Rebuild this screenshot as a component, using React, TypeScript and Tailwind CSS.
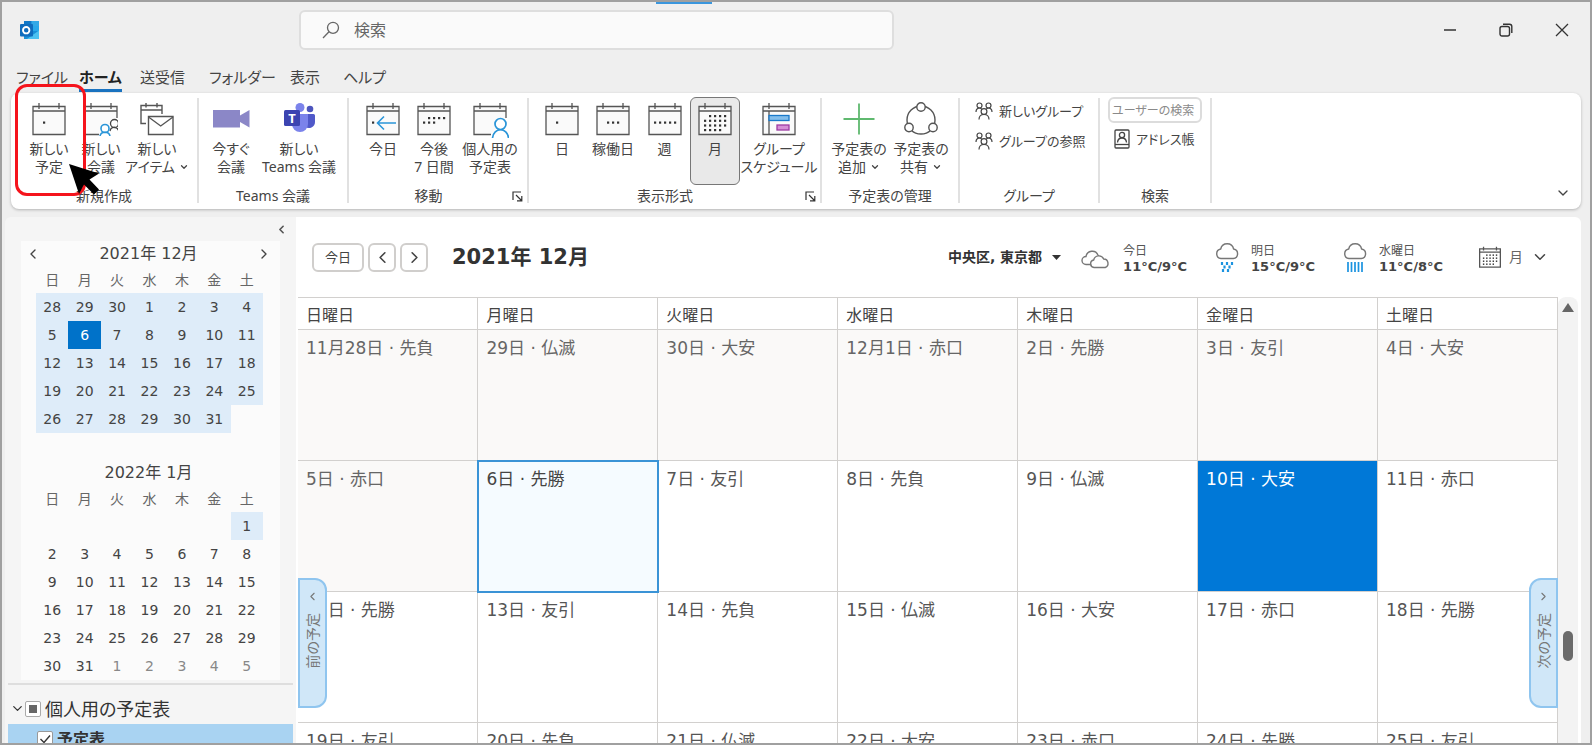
import React from 'react';
import clsx from 'clsx';
import { ChevronDown, ChevronLeft, ChevronRight } from 'lucide-react';

const UI_FONT = "font-['Noto_Sans','Noto_Sans_CJK_JP',sans-serif] [font-feature-settings:'palt']";
const CAL_FONT = "font-['DejaVu_Sans','Noto_Sans_CJK_JP',sans-serif]";

const TABS = [
    { label: 'ファイル', width: 'w-[63px]' },
    { label: 'ホーム', width: 'w-[61px]' },
    { label: '送受信', width: 'w-[69px]' },
    { label: 'フォルダー', width: 'w-[81px]' },
    { label: '表示', width: 'w-[53px]' },
    { label: 'ヘルプ', width: 'w-[53px]' },
];

const DAYS = ['日', '月', '火', '水', '木', '金', '土'];

const MONTH_ROWS = [
    ['11月28日 · 先負', '29日 · 仏滅', '30日 · 大安', '12月1日 · 赤口', '2日 · 先勝', '3日 · 友引', '4日 · 大安'],
    ['5日 · 赤口', '6日 · 先勝', '7日 · 友引', '8日 · 先負', '9日 · 仏滅', '10日 · 大安', '11日 · 赤口'],
    ['12日 · 先勝', '13日 · 友引', '14日 · 先負', '15日 · 仏滅', '16日 · 大安', '17日 · 赤口', '18日 · 先勝'],
    ['19日 · 友引', '20日 · 先負', '21日 · 仏滅', '22日 · 大安', '23日 · 赤口', '24日 · 先勝', '25日 · 友引'],
];

const DECEMBER = [
    [28, 29, 30, 1, 2, 3, 4],
    [5, 6, 7, 8, 9, 10, 11],
    [12, 13, 14, 15, 16, 17, 18],
    [19, 20, 21, 22, 23, 24, 25],
    [26, 27, 28, 29, 30, 31, null],
];

const JANUARY = [
    [null, null, null, null, null, null, 1],
    [2, 3, 4, 5, 6, 7, 8],
    [9, 10, 11, 12, 13, 14, 15],
    [16, 17, 18, 19, 20, 21, 22],
    [23, 24, 25, 26, 27, 28, 29],
    [30, 31, 1, 2, 3, 4, 5],
];

/* ---------- icons ---------- */

const Dots = ({ points }: { points: number[][] }) => (
    <g fill="#333" stroke="none">
        {points.map(([x, y]) => <rect key={`${x}-${y}`} x={x - 1} y={y - 1} width="2.200" height="2.200" />)}
    </g>
);

const CalendarIcon = ({ children, frame = 'M1 4.5H33V32.5H1Z' }: { children?: React.ReactNode, frame?: string }) => (
    <svg width="34" height="34" viewBox="0 0 34 34" fill="none" stroke="#555" strokeWidth="1.3">
        <path d={frame} fill="#fafafa" />
        <path d="M1 9H33M7 1v6M27 1v6" />
        {children}
    </svg>
);

const monthDots = [
    ...[12, 17, 22, 27].map(x => [x, 14]),
    ...[7, 12, 17, 22, 27].map(x => [x, 18.7]),
    ...[7, 12, 17, 22, 27].map(x => [x, 23.4]),
    ...[7, 12, 17, 22].map(x => [x, 28]),
];

const DayIcon = () => <CalendarIcon><Dots points={[[12, 20.5]]} /></CalendarIcon>;
const WorkWeekIcon = () => <CalendarIcon><Dots points={[[12, 20.5], [17, 20.5], [22, 20.5]]} /></CalendarIcon>;
const WeekIcon = () => <CalendarIcon><Dots points={[[7, 20.5], [12, 20.5], [17, 20.5], [22, 20.5], [27, 20.5]]} /></CalendarIcon>;
const MonthIcon = () => <CalendarIcon><Dots points={monthDots} /></CalendarIcon>;

const NextWeekIcon = () => (
    <CalendarIcon><Dots points={[[12, 16], [17, 16], [22, 16], [27, 16], [7, 20.5], [12, 20.5], [17, 20.5]]} /></CalendarIcon>
);

const GotoTodayIcon = () => (
    <CalendarIcon>
        <Dots points={[[7, 20.5]]} />
        <path d="M30 21H12M18 14.5L11.5 21L18 27.5" stroke="#2a95d8" strokeWidth="1.6" />
    </CalendarIcon>
);

const NewMeetingIcon = () => (
    <CalendarIcon frame="M15 32.5H1V4.5H33V16">
        <g stroke="#444">
            <circle cx="30.5" cy="21.5" r="4" fill="#fff" />
            <path d="M26 29c1-5 8-5 9 1" />
        </g>
        <g stroke="#2a95d8" strokeWidth="1.6">
            <circle cx="21" cy="26.5" r="4" fill="#fff" />
            <path d="M16 34c1-5 9-5 10 0" />
        </g>
    </CalendarIcon>
);

const PersonalCalendarIcon = () => (
    <svg width="38" height="38" viewBox="-2 0 38 38" fill="none" stroke="#555" strokeWidth="1.3" className="-mb-1">
        <path d="M18 32.5H1V4.5H33V16" fill="#fafafa" />
        <path d="M1 9H33M7 1v6M27 1v6" />
        <g stroke="#2a95d8" strokeWidth="1.7">
            <circle cx="27.5" cy="22" r="5.5" fill="#fff" />
            <path d="M19.5 36c1-11 15-11 16 0" />
        </g>
    </svg>
);

const NewItemIcon = () => (
    <svg width="34" height="34" viewBox="0 0 34 34" fill="none" stroke="#555" strokeWidth="1.4">
        <path d="M6 21.5H1V3.5H22V12M1 8H22M6 1v4.500M17 1v4.500" />
        <path d="M8.5 14.5H33V32.5H8.5Z" fill="#fff" />
        <path d="M8.5 15L20.7 24L33 15" />
    </svg>
);

const VideoIcon = () => (
    <svg width="38" height="34" viewBox="0 0 38 34" fill="#8b87c7">
        <path d="M1 8H28V25.5H1Z" />
        <path d="M28 13.5L37.5 8V25.5L28 20Z" />
    </svg>
);

const TeamsIcon = () => (
    <svg width="34" height="34" viewBox="0 0 34 34">
        <circle cx="28" cy="7" r="3.3" fill="#4d55bd" />
        <circle cx="18" cy="5.5" r="4.5" fill="#7b83eb" />
        <path d="M23 12H31.5Q33 12 33 13.5V20a6 6 0 0 1-10 4.500Z" fill="#5059c9" />
        <path d="M10 12H26V22a8 8 0 0 1-16 0Z" fill="#7b83eb" />
        <rect x="2" y="8" width="16" height="16" rx="1.5" fill="#3c44b1" />
        <text x="10" y="21" textAnchor="middle" fontSize="13" fontWeight="700" fill="#fff" fontFamily="Noto Sans">T</text>
    </svg>
);

const GroupScheduleIcon = () => (
    <CalendarIcon>
        <path d="M7 9V32.5" />
        <rect x="7" y="13.5" width="20" height="5" fill="#83beec" stroke="#1979ca" />
        <rect x="15" y="23" width="12" height="5" fill="#d58fd6" stroke="#9d3ba3" />
    </CalendarIcon>
);

const PlusIcon = () => (
    <svg width="34" height="34" viewBox="0 0 34 34" fill="none" stroke="#5fb96f" strokeWidth="1.8">
        <path d="M17 1.5V32.5M1.5 17H32.5" />
    </svg>
);

const ShareIcon = () => (
    <svg width="34" height="34" viewBox="0 0 34 34" fill="none" stroke="#555" strokeWidth="1.4">
        <circle cx="17" cy="18" r="14" />
        <g fill="#fff">
            <circle cx="17" cy="5" r="4.2" />
            <circle cx="5" cy="25.5" r="4.2" />
            <circle cx="29" cy="25.5" r="4.2" />
        </g>
    </svg>
);

const GroupIcon = () => (
    <svg width="18" height="18" viewBox="0 0 18 18" fill="none" stroke="#444" strokeWidth="1.2">
        <circle cx="4.5" cy="3.5" r="2.5" />
        <circle cx="13.5" cy="3.5" r="2.5" />
        <circle cx="9" cy="9.5" r="2.9" />
        <path d="M1 10c0-2.500 1.500-4 3.500-4 1.500 0 2 1 2.500 1.500M17 10c0-2.500-1.500-4-3.500-4-1.500 0-2 1-2.500 1.500M4 17.500c0-3 2-5 5-5s5 2 5 5" />
    </svg>
);

const AddressBookIcon = () => (
    <svg width="16" height="20" viewBox="0 0 16 20" fill="none" stroke="#444" strokeWidth="1.3">
        <rect x="1" y="1" width="14" height="18" rx="1" />
        <path d="M1 15.5H15" />
        <circle cx="8" cy="6" r="2.6" />
        <path d="M3.5 13.5c.5-6 8.500-6 9 0" />
    </svg>
);

const LauncherIcon = () => (
    <svg width="11" height="11" viewBox="0 0 11 11" fill="none" stroke="#333" strokeWidth="1.2">
        <path d="M1 9V1H9M4 4L9.5 9.5M9.8 5V9.8H5" />
    </svg>
);

const OutlookLogo = () => (
    <svg width="20" height="20" viewBox="0 0 20 20">
        <path d="M4 1H19V19H4Z" fill="#1490df" />
        <path d="M4 1H11.5V6H4Z" fill="#0f78c8" />
        <path d="M11.5 1H19V6H11.5Z" fill="#32a9e7" />
        <path d="M11.5 6H19V11H11.5Z" fill="#28a8ea" />
        <path d="M4 12L19 11V19H4Z" fill="#1b8fd6" />
        <path d="M19 10.5V19H7Z" fill="#4cc2f1" />
        <rect x="0" y="4" width="13" height="12.5" rx="1" fill="#0f6cbd" />
        <circle cx="6.2" cy="10.2" r="3.2" fill="none" stroke="#fff" strokeWidth="1.9" />
    </svg>
);

const SearchIcon = () => (
    <svg width="18" height="18" viewBox="0 0 18 18" fill="none" stroke="#666" strokeWidth="1.3">
        <circle cx="11" cy="6.8" r="5.5" />
        <path d="M7 10.8L1 17" />
    </svg>
);

const CLOUD = 'M6 15.5a4.800 4.800 0 0 1-.3-9.500 6.600 6.600 0 0 1 12.900 0 4.800 4.800 0 0 1-.3 9.500Z';

const CloudyIcon = () => (
    <svg width="30" height="20" viewBox="0 0 30 20" fill="#fff" stroke="#777" strokeWidth="1.4">
        <path d="M5 15.5a4 4 0 0 1 0-8 6.300 6.300 0 0 1 12-1.500l3 5-6 4.500Z" />
        <path d="M13 18.5a3.800 3.800 0 0 1-.3-7.500 5.300 5.300 0 0 1 10-1 4.400 4.400 0 0 1 1.500 8.500Z" />
    </svg>
);

const ShowerIcon = () => (
    <svg width="24" height="32" viewBox="0 0 24 32" fill="none" strokeWidth="1.4">
        <path d={CLOUD} stroke="#777" />
        <path d="M7 19v3M12 19v3M17 19v3M9.5 22.5v3M14.5 22.5v3M8 26v3M13 26v3" stroke="#1b93e0" strokeWidth="2.2" />
    </svg>
);

const RainIcon = () => (
    <svg width="24" height="32" viewBox="0 0 24 32" fill="none" strokeWidth="1.4">
        <path d={CLOUD} stroke="#777" />
        <path d="M5 19v10M8.5 19v10M12 19v10M15.5 19v10M19 19v10" stroke="#1b93e0" strokeWidth="1.7" />
    </svg>
);

/* ---------- window chrome ---------- */

const TitleBar = () => (
    <header className="relative flex h-14 shrink-0 items-center pl-[18px]">
        <div className="absolute top-0 left-[654px] h-0.5 w-14 bg-[#3a96dd]"></div>
        <OutlookLogo />
        <label className="ml-[259px] flex h-10 w-[595px] items-center rounded-md border-2 border-[#dedede] bg-[#fafafa] pl-[21px]">
            <SearchIcon />
            <input type="search" aria-label="検索" placeholder="検索" className="ml-3.5 min-w-0 flex-1 bg-transparent text-base text-[#555] outline-none placeholder:text-[#666]" />
        </label>
        <div className="ml-auto flex text-[#333]">
            <button aria-label="最小化" className="flex h-8 w-14 items-center justify-center">
                <svg width="14" height="14" viewBox="0 0 14 14" stroke="currentColor" strokeWidth="1.5"><path d="M1 7H13" /></svg>
            </button>
            <button aria-label="元に戻す" className="flex h-8 w-14 items-center justify-center">
                <svg width="14" height="14" viewBox="0 0 14 14" fill="none" stroke="currentColor" strokeWidth="1.4">
                    <rect x="1" y="3.5" width="9.5" height="9.5" rx="2" />
                    <path d="M4 1.2H10.5Q12.8 1.2 12.8 3.5V10" />
                </svg>
            </button>
            <button aria-label="閉じる" className="flex h-8 w-14 items-center justify-center">
                <svg width="14" height="14" viewBox="0 0 14 14" stroke="currentColor" strokeWidth="1.3"><path d="M1 1L13 13M13 1L1 13" /></svg>
            </button>
        </div>
    </header>
);

const TabBar = () => (
    <nav className="flex h-[35px] shrink-0 pl-3.5 text-[15px] text-[#444]">
        {TABS.map(({ label, width }) => (
            <button key={label} className={clsx('flex items-start pt-1 whitespace-nowrap', width)}>
                <span className={clsx('border-b-3 pt-1 leading-[23px]', label === 'ホーム' ? 'border-[#1a73c0] font-bold text-[#222]' : 'border-transparent')}>
                    {label}
                </span>
            </button>
        ))}
    </nav>
);

/* ---------- ribbon ---------- */

interface RibbonButtonProps {
    icon: React.ReactNode;
    lines: string[];
    width: string;
    active?: boolean;
    menu?: boolean;
}

const RibbonButton = ({ icon, lines, width, active, menu }: RibbonButtonProps) => (
    <button
        className={clsx(
            'flex h-[88px] shrink-0 flex-col items-center rounded-md border pt-1',
            active ? 'border-[#777] bg-[#e9e9e9]' : 'border-transparent',
            width,
        )}
    >
        {icon}
        {lines.map((line, i) => (
            <span key={line} className={clsx('flex items-center text-sm leading-[18px] whitespace-nowrap', i === 0 && 'mt-1')}>
                {line}
                {menu && i === lines.length - 1 && <ChevronDown size={10} strokeWidth={3} className="ml-1" />}
            </span>
        ))}
    </button>
);

interface RibbonGroupProps {
    label: string;
    width: string;
    pad?: string;
    launcher?: boolean;
    children: React.ReactNode;
}

const RibbonGroup = ({ label, width, pad, launcher, children }: RibbonGroupProps) => (
    <section className={clsx('flex shrink-0 flex-col', width)}>
        <div className={clsx('-mt-px flex h-[88px] shrink-0', pad)}>{children}</div>
        <div className="flex h-[22px] shrink-0 items-center">
            <h2 className="flex-1 text-center text-sm">{label}</h2>
            {launcher && <button aria-label={`${label}のオプション`} className="mr-1 ml-1"><LauncherIcon /></button>}
        </div>
    </section>
);

const Ribbon = () => (
    <div className="mr-[9px] ml-[9px] flex h-[116px] shrink-0 items-start rounded-lg bg-white pt-[5px] text-[#444] shadow-[0_1px_3px_rgba(0,0,0,0.25)]">
        <div className="flex h-[105px] divide-x-2 divide-[#e1e1e1]">
            <RibbonGroup label="新規作成" width="w-[188px]" pad="pl-3">
                <RibbonButton icon={<DayIcon />} lines={['新しい', '予定']} width="w-[52px]" />
                <RibbonButton icon={<NewMeetingIcon />} lines={['新しい', '会議']} width="w-[52px]" />
                <RibbonButton icon={<NewItemIcon />} lines={['新しい', 'アイテム']} width="w-[60px]" menu />
            </RibbonGroup>
            <RibbonGroup label="Teams 会議" width="w-[150px]" pad="pl-1">
                <RibbonButton icon={<VideoIcon />} lines={['今すぐ', '会議']} width="w-[56px]" />
                <RibbonButton icon={<TeamsIcon />} lines={['新しい', 'Teams 会議']} width="w-[80px]" />
            </RibbonGroup>
            <RibbonGroup label="移動" width="w-[180px]" pad="pl-2" launcher>
                <RibbonButton icon={<GotoTodayIcon />} lines={['今日']} width="w-[52px]" />
                <RibbonButton icon={<NextWeekIcon />} lines={['今後', '7 日間']} width="w-[50px]" />
                <RibbonButton icon={<PersonalCalendarIcon />} lines={['個人用の', '予定表']} width="w-[62px]" />
            </RibbonGroup>
            <RibbonGroup label="表示形式" width="w-[293px]" pad="pl-2" launcher>
                <RibbonButton icon={<DayIcon />} lines={['日']} width="w-[50px]" />
                <RibbonButton icon={<WorkWeekIcon />} lines={['稼働日']} width="w-[52px]" />
                <RibbonButton icon={<WeekIcon />} lines={['週']} width="w-[51px]" />
                <RibbonButton icon={<MonthIcon />} lines={['月']} width="w-[50px]" active />
                <RibbonButton icon={<GroupScheduleIcon />} lines={['グループ', 'スケジュール']} width="w-[78px]" />
            </RibbonGroup>
            <RibbonGroup label="予定表の管理" width="w-[138px]" pad="pl-1.5">
                <RibbonButton icon={<PlusIcon />} lines={['予定表の', '追加']} width="w-[62px]" menu />
                <RibbonButton icon={<ShareIcon />} lines={['予定表の', '共有']} width="w-[62px]" menu />
            </RibbonGroup>
            <RibbonGroup label="グループ" width="w-[140px]">
                <div className="flex flex-col items-start gap-2.5 pt-1 pl-[15px] text-[13px] leading-5">
                    <button className="flex items-center gap-1.5 whitespace-nowrap"><GroupIcon />新しいグループ</button>
                    <button className="flex items-center gap-1.5 whitespace-nowrap"><GroupIcon />グループの参照</button>
                </div>
            </RibbonGroup>
            <RibbonGroup label="検索" width="w-[112px]">
                <div className="flex flex-col items-start gap-1.5 pl-2 text-[13px] leading-5">
                    <input type="text" aria-label="ユーザーの検索" placeholder="ユーザーの検索" className="h-[26px] w-[94px] rounded-md border-2 border-[#dcdcdc] px-0.5 text-xs outline-none placeholder:text-[#8a8a8a]" />
                    <button className="flex items-center gap-1.5 pl-1.5 whitespace-nowrap"><AddressBookIcon />アドレス帳</button>
                </div>
            </RibbonGroup>
            <div></div>
        </div>
        <button aria-label="リボンを折りたたむ" className="mt-[87px] mr-2.5 ml-auto"><ChevronDown size={16} strokeWidth={2} /></button>
    </div>
);

/* ---------- sidebar ---------- */

const MiniMonth = ({ title, weeks, nav, cellClass }: {
    title: string,
    weeks: (number | null)[][],
    nav?: boolean,
    cellClass: (day: number, week: number) => string,
}) => (
    <div>
        <div className="flex h-[26px] items-center pr-2 pl-1 text-[#444]">
            {nav && <button aria-label="前の月"><ChevronLeft size={16} /></button>}
            <h3 className="flex-1 text-center text-base">{title}</h3>
            {nav && <button aria-label="次の月"><ChevronRight size={16} /></button>}
        </div>
        <table className="mx-[15px] w-[227px] table-fixed border-collapse text-center text-sm">
            <thead>
                <tr className="h-[26px] text-[#666]">{DAYS.map(d => <th key={d} className="p-0 font-normal">{d}</th>)}</tr>
            </thead>
            <tbody>
                {weeks.map((week, w) => (
                    <tr key={w} className="h-7">
                        {week.map((day, i) => <td key={i} className={clsx('p-0', day !== null && cellClass(day, w))}>{day}</td>)}
                    </tr>
                ))}
            </tbody>
        </table>
    </div>
);

const Sidebar = () => (
    <aside className="flex w-[291px] shrink-0 flex-col rounded-tl-md bg-[#f5f5f5]">
        <div className="flex h-6 shrink-0 items-center justify-end pr-2">
            <button aria-label="ウィンドウを折りたたむ"><ChevronLeft size={13} strokeWidth={3} className="text-[#555]" /></button>
        </div>
        <div className={clsx('mx-4 flex shrink-0 flex-col gap-[27px] bg-[#fbfbfb]', CAL_FONT)}>
            <MiniMonth
                title="2021年 12月"
                weeks={DECEMBER}
                nav
                cellClass={day => day === 6 ? 'bg-[#0072c9] text-white' : 'bg-[#deecf9] text-[#444]'}
            />
            <MiniMonth
                title="2022年 1月"
                weeks={JANUARY}
                cellClass={(day, w) => w === 0 ? 'bg-[#deecf9] text-[#444]' : w === 5 && day < 6 ? 'text-[#888]' : 'text-[#444]'}
            />
        </div>
        <div className="mx-[3px] mt-[3px] shrink-0 border-t-2 border-[#dedede]">
            <div className="flex h-[39px] items-center pt-2 pl-0.5 text-lg text-[#333]">
                <button aria-label="グループを折りたたむ"><ChevronDown size={15} strokeWidth={2} /></button>
                <label className="flex items-center gap-1 whitespace-nowrap">
                    <span className="relative flex">
                        <input type="checkbox" className="size-4 appearance-none rounded-xs border border-[#aaa] bg-white" />
                        <span className="absolute top-1 left-1 size-2 bg-[#666]"></span>
                    </span>
                    個人用の予定表
                </label>
            </div>
            <label className="flex h-[30px] items-center gap-1 bg-[#a9d3f2] pl-[29px] text-base font-bold text-[#333]">
                <span className="relative flex">
                    <input type="checkbox" defaultChecked className="size-4 appearance-none rounded-xs border border-[#999] bg-white" />
                    <svg className="absolute inset-0" width="16" height="16" viewBox="0 0 16 16" fill="none" stroke="#333" strokeWidth="1.4"><path d="M3.5 8L7 11.5L13 4.5" /></svg>
                </span>
                予定表
            </label>
        </div>
    </aside>
);

/* ---------- month view ---------- */

const Forecast = ({ icon, day, temp }: { icon: React.ReactNode, day: string, temp: string }) => (
    <div className="flex items-center gap-3">
        {icon}
        <div>
            <p className="text-xs leading-4 text-[#555]">{day}</p>
            <p className="text-[13px] leading-4 font-bold whitespace-nowrap text-[#444]">{temp}</p>
        </div>
    </div>
);

const CalendarToolbar = () => (
    <div className="flex h-20 shrink-0 items-center pr-8 pl-4">
        <div className="flex gap-1 text-[#444]">
            <button className="h-[29px] w-[52px] rounded-md border-2 border-[#d0cecc] text-[13px] leading-none">今日</button>
            <button aria-label="前へ" className="flex h-[29px] w-7 items-center justify-center rounded-md border-2 border-[#d0cecc]"><ChevronLeft size={19} /></button>
            <button aria-label="次へ" className="flex h-[29px] w-7 items-center justify-center rounded-md border-2 border-[#d0cecc]"><ChevronRight size={19} /></button>
        </div>
        <h1 className="ml-6 pt-0.5 text-[21px] font-bold whitespace-nowrap text-[#333]">2021年 12月</h1>
        <button className="mr-5 ml-auto flex items-center gap-2.5 text-sm font-bold whitespace-nowrap text-[#333]">
            中央区, 東京都
            <svg width="9" height="5" viewBox="0 0 9 5" fill="#333"><path d="M0 0H9L4.5 5Z" /></svg>
        </button>
        <div className="flex gap-7 pt-1">
            <Forecast icon={<CloudyIcon />} day="今日" temp="11°C/9°C" />
            <Forecast icon={<ShowerIcon />} day="明日" temp="15°C/9°C" />
            <Forecast icon={<RainIcon />} day="水曜日" temp="11°C/8°C" />
        </div>
        <button className="ml-9 flex items-center gap-2 text-sm text-[#666]">
            <svg width="22" height="22" viewBox="0 0 34 34" fill="none" stroke="#555" strokeWidth="2">
                <path d="M1 4.5H33V32.5H1ZM1 9.5H33M7 1v6M27 1v6" />
                <Dots points={monthDots} />
            </svg>
            月
            <ChevronDown size={18} strokeWidth={2} className="text-[#444]" />
        </button>
    </div>
);

const cellStyle = (row: number, col: number) => {
    if (row === 1 && col === 1) return 'bg-[#f5fbff] text-[#444] outline-2 -outline-offset-1 outline-[#3a93d6]';
    if (row === 1 && col === 5) return 'bg-[#0078d7] text-white';
    if (row === 0 || (row === 1 && col === 0)) return 'bg-[#faf9f8] text-[#666]';
    return 'bg-white text-[#555]';
};

const MonthTable = () => (
    <table className="w-full table-fixed border-collapse text-left">
        <thead>
            <tr className="h-8">
                {DAYS.map(d => (
                    <th key={d} className="border border-l-0 border-[#d2d0ce] p-0 pt-1 pl-2 text-base leading-6 font-normal text-[#444]">{d}曜日</th>
                ))}
            </tr>
        </thead>
        <tbody>
            {MONTH_ROWS.map((row, r) => (
                <tr key={r} className="h-[131px]">
                    {row.map((text, c) => (
                        <td key={text} className={clsx('border border-l-0 border-[#d2d0ce] p-0 pt-1.5 pl-2 align-top text-[17px] leading-6 whitespace-nowrap', cellStyle(r, c))}>
                            {text}
                        </td>
                    ))}
                </tr>
            ))}
        </tbody>
    </table>
);

const SideHandle = ({ label, side }: { label: string, side: 'left' | 'right' }) => (
    <button
        className={clsx(
            'absolute top-[281px] flex h-[130px] w-[29px] flex-col items-center gap-2.5 border-2 border-[#8fc5ef] bg-[#d0e7f8] pt-2.5 text-[#777]',
            side === 'left' ? 'left-0 rounded-r-xl' : 'right-0 rounded-l-xl',
        )}
    >
        {side === 'left' ? <ChevronLeft size={13} /> : <ChevronRight size={13} />}
        <span className={clsx('rotate-180 text-sm leading-none whitespace-nowrap [writing-mode:vertical-rl] [text-orientation:sideways]', UI_FONT)}>{label}</span>
    </button>
);

const MonthView = () => (
    <main className={clsx('flex min-w-0 flex-1 flex-col overflow-hidden rounded-tr-md bg-white', CAL_FONT)}>
        <CalendarToolbar />
        <div className="flex min-h-0 flex-1 pl-0.5">
            <div className="relative min-w-0 flex-1">
                <MonthTable />
                <SideHandle label="前の予定" side="left" />
                <SideHandle label="次の予定" side="right" />
            </div>
            <div className="mr-[3px] flex w-5 flex-col items-center rounded-t-lg bg-[#f3f3f3] pt-1.5">
                <svg width="12" height="9" viewBox="0 0 12 9" fill="#666"><path d="M6 0L12 9H0Z" /></svg>
                <div className="mt-[319px] h-[30px] w-2.5 rounded-full bg-[#6b6b6b]"></div>
            </div>
        </div>
    </main>
);

/* ---------- guide overlay ---------- */

const ClickGuide = () => (
    <div className="pointer-events-none absolute top-[82px] left-[13px] h-28 w-[71px] rounded-xl border-3 border-[#f5141c]">
        <svg className="absolute top-[76px] left-[50px]" width="36" height="36" viewBox="0 0 36 36">
            <path d="M1 1L31 10.5L21.5 16.5L31 26.5L26 31.5L16 21.5L11 31Z" fill="#000" />
        </svg>
    </div>
);

export default function App() {
    return (
        <div className={clsx('relative flex h-screen w-full flex-col overflow-hidden border-2 border-[#a0a0a0] bg-[#efefef]', UI_FONT)}>
            <TitleBar />
            <TabBar />
            <Ribbon />
            <div className="mt-2 mr-[9px] ml-[3px] flex min-h-0 flex-1 overflow-hidden">
                <Sidebar />
                <MonthView />
            </div>
            <ClickGuide />
        </div>
    );
}
